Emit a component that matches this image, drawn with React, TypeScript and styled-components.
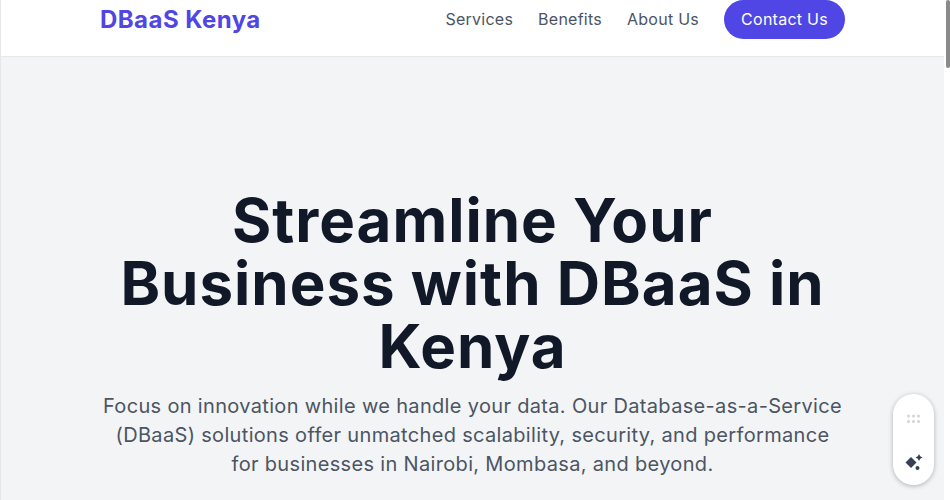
import styled, { createGlobalStyle } from 'styled-components';

const GlobalStyle = createGlobalStyle`
  html, body {
    margin: 0;
    padding: 0;
    height: 500px;
    overflow: hidden;
    background: #ffffff;
    font-family: Inter, "Liberation Sans", sans-serif;
  }
`;

const Page = styled.div`
  width: 944px;
  height: 500px;
  overflow: hidden;
  background: #f3f4f6;
  border-left: 1px solid #e5e7eb;
  box-sizing: border-box;
`;

const Header = styled.header`
  height: 57px;
  box-sizing: border-box;
  background: #ffffff;
  border-bottom: 1px solid #e5e7eb;
  display: flex;
  align-items: flex-start;
  justify-content: space-between;
  padding: 0 99px;
`;

const Logo = styled.div`
  font-size: 24px;
  line-height: 32px;
  font-weight: 700;
  letter-spacing: 0.45px;
  color: #4f46e5;
  margin-top: 4px;
`;

const Nav = styled.nav`
  display: flex;
  align-items: center;
  gap: 25px;
  height: 39px;
`;

const NavLink = styled.a`
  font-size: 16px;
  line-height: 24px;
  letter-spacing: 0.25px;
  color: #4b5563;
  margin-top: -2px;
`;

const ContactButton = styled.a`
  display: flex;
  align-items: center;
  justify-content: center;
  width: 121px;
  height: 39px;
  padding-bottom: 2px;
  box-sizing: border-box;
  border-radius: 20px;
  background: #4f46e5;
  color: #ffffff;
  font-size: 16px;
  font-weight: 400;
  letter-spacing: 0.25px;
`;

const Hero = styled.section`
  display: flex;
  flex-direction: column;
  align-items: center;
  padding-top: 132px;
`;

const Title = styled.h1`
  margin: 0;
  width: 720px;
  text-align: center;
  font-size: 60px;
  line-height: 63px;
  font-weight: 700;
  letter-spacing: 1px;
  color: #111827;
`;

const Lead = styled.p`
  margin: 14px 0 0;
  width: 742px;
  text-align: center;
  font-size: 20px;
  line-height: 29px;
  letter-spacing: 0.33px;
  color: #4b5563;
`;

const ScrollTrack = styled.div`
  position: fixed;
  top: 0;
  right: 0;
  width: 6px;
  height: 500px;
  background: #ffffff;
`;

const ScrollThumb = styled.div`
  width: 4px;
  height: 68px;
  margin-left: 2px;
  border-radius: 2px;
  background: #8a8a8a;
`;

const Widget = styled.div`
  position: fixed;
  left: 893px;
  top: 394px;
  width: 41px;
  height: 91px;
  border-radius: 21px;
  background: #ffffff;
  box-shadow: 0 1px 5px rgba(0, 0, 0, 0.28);
  display: flex;
  flex-direction: column;
  align-items: center;
  justify-content: space-between;
  padding: 20px 0 14px;
  box-sizing: border-box;
`;

const GripIcon = () => (
  <svg width="14" height="10" viewBox="0 0 14 10" fill="#d1d5db">
    {[1.5, 6.5, 11.5].flatMap((x) =>
      [2, 7.5].map((y) => <circle key={`${x}-${y}`} cx={x} cy={y} r="1.5" />)
    )}
  </svg>
);

const SparkIcon = () => (
  <svg width="18" height="17" viewBox="0 0 18 17" fill="#374151">
    <path d="M6 3 L11.5 8.5 L6 14 L0.5 8.5 Z" />
    <path d="M14 0 L15.2 2.3 L17.5 3.5 L15.2 4.7 L14 7 L12.8 4.7 L10.5 3.5 L12.8 2.3 Z" />
    <circle cx="12.5" cy="14" r="2" />
  </svg>
);

const App = () => {
  return (
    <>
      <GlobalStyle />
      <Page>
        <Header>
          <Logo>DBaaS Kenya</Logo>
          <Nav>
            <NavLink>Services</NavLink>
            <NavLink>Benefits</NavLink>
            <NavLink>About Us</NavLink>
            <ContactButton>Contact Us</ContactButton>
          </Nav>
        </Header>
        <Hero>
          <Title>Streamline Your Business with DBaaS in Kenya</Title>
          <Lead>
            Focus on innovation while we handle your data. Our Database-as-a-Service (DBaaS) solutions offer unmatched
            scalability, security, and performance for businesses in Nairobi, Mombasa, and beyond.
          </Lead>
        </Hero>
      </Page>
      <ScrollTrack>
        <ScrollThumb />
      </ScrollTrack>
      <Widget>
        <GripIcon />
        <SparkIcon />
      </Widget>
    </>
  );
};

export default App;
